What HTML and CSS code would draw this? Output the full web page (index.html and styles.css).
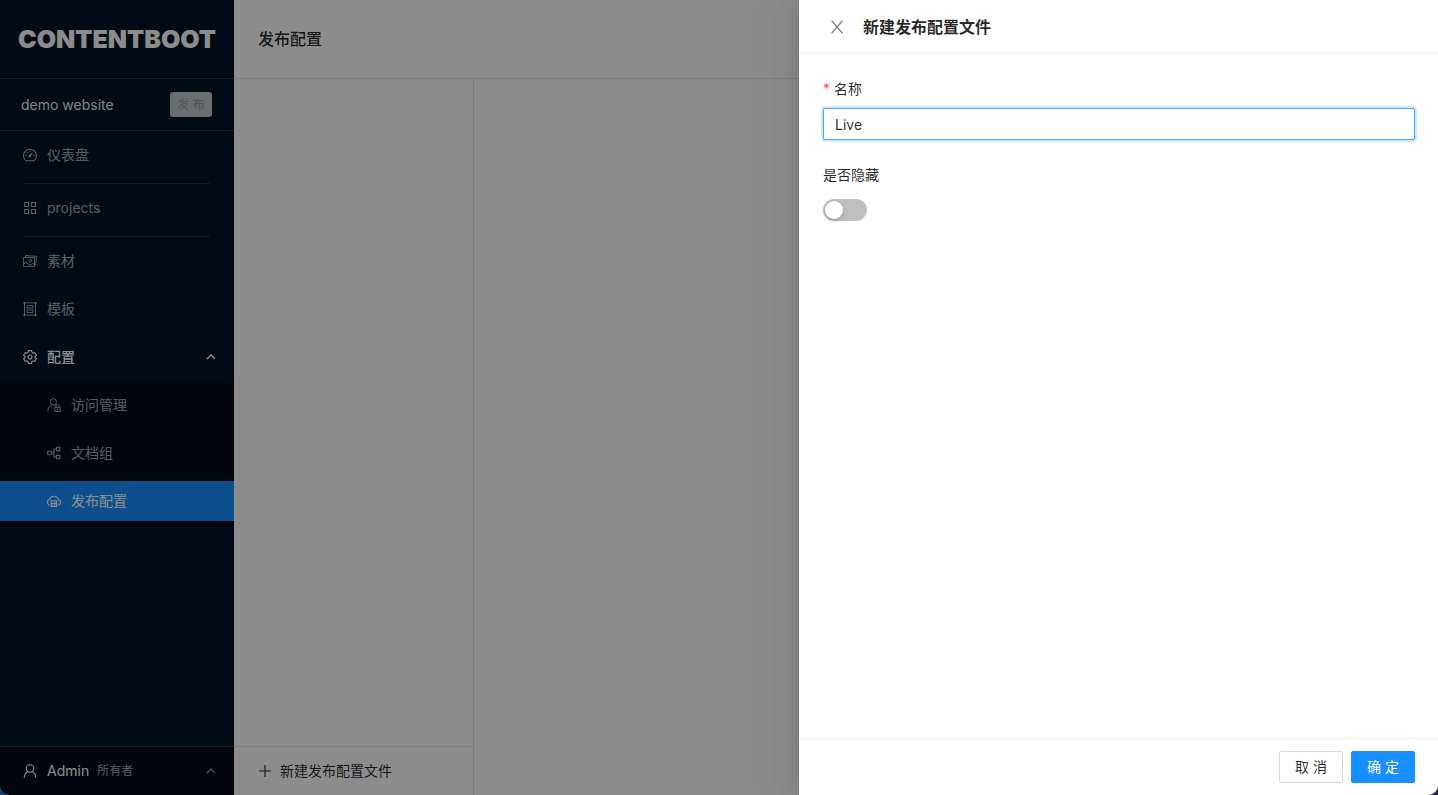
FILE: index.html
```html
<!DOCTYPE html>
<html lang="zh-CN">
<head>
<meta charset="utf-8">
<meta name="viewport" content="width=device-width, initial-scale=1">
<title>发布配置 - CONTENTBOOT</title>
<link rel="stylesheet" href="styles.css">
</head>
<body>
<div class="window">
  <div class="app">
    <aside class="sidebar">
      <div class="brand">CONTENTBOOT</div>
      <div class="site">
        <span class="site-name">demo website</span>
        <button class="publish" type="button" disabled>发 布</button>
      </div>
      <nav class="menu">
        <a class="item" href="#">
          <svg class="icon" viewBox="0 0 14 14"><path d="M3 12.8A6.5 6.5 0 1 1 11 12.8Z"/><path d="M6.6 7.9 9.4 4.9M7 2.4v1.3M2.4 7.4h1.3M10.3 7.4h1.3M3.7 4.1l.9.9"/><circle cx="6.6" cy="7.9" r=".7"/></svg>
          <span>仪表盘</span>
        </a>
        <hr class="divider">
        <a class="item" href="#">
          <svg class="icon" viewBox="0 0 14 14"><path d="M1.5 1.5h4v4h-4zM8.5 1.5h4v4h-4zM1.5 8.5h4v4h-4zM8.5 8.5h4v4h-4z"/></svg>
          <span>projects</span>
        </a>
        <hr class="divider">
        <a class="item" href="#">
          <svg class="icon thin" viewBox="0 0 14 14"><path d="M.5 3.5h11v9H.5z"/><path d="M2.3 3.6 2.6 1.4 13.5 2.4 12.7 11 11.4 11.1"/><path d="m.7 10.2 2.4-2.1 2 2.2 2.3 1 3.9-3.2"/><circle cx="7.4" cy="6.6" r="1.3"/></svg>
          <span>素材</span>
        </a>
        <a class="item" href="#">
          <svg class="icon thin" viewBox="0 0 14 14"><path d="M1.5 0v14M12.5 0v14M0 .9h14M0 13.1h14M4 3.5h6v2.5H4zM4 8h6v2.5H4z"/></svg>
          <span>模板</span>
        </a>
        <a class="item open" href="#" aria-expanded="true">
          <svg class="icon" viewBox="0 0 14 14"><path d="M5.5.6h3l.5 1.9 1 .6 1.8-.5 1.6 2.6-1.4 1.3v1l1.4 1.3-1.6 2.6-1.8-.4-1 .5-.5 1.9h-3L5 11.5l-1-.5-1.8.4L.6 8.8 2 7.5v-1L.6 5.2l1.6-2.6 1.8.5 1-.6Z"/><circle cx="7" cy="7" r="2"/></svg>
          <span>配置</span>
          <svg class="arrow" viewBox="0 0 10 10"><path d="m1 7 4-4 4 4"/></svg>
        </a>
        <div class="submenu">
          <a class="item" href="#">
            <svg class="icon thin" viewBox="0 0 14 14"><circle cx="6.3" cy="3.8" r="3.2"/><path d="M.7 13.4c.2-3.4 1.8-5.6 4-6.4M8 6.6l.8.6"/><path d="M7.8 9.4h5.4v4H7.8zM9 9.4V8a1.5 1.5 0 0 1 3 0v1.4M10.5 11v1"/></svg>
            <span>访问管理</span>
          </a>
          <a class="item" href="#">
            <svg class="icon" viewBox="0 0 14 14"><path d="M.8 5.3h3.4v3.4H.8zM9.5 1.3h3.3v3.3H9.5zM9.5 9.4h3.3v3.3H9.5zM4.2 7H7M9.5 3H7v8h2.5"/></svg>
            <span>文档组</span>
          </a>
          <a class="item active" href="#" aria-current="page">
            <svg class="icon" viewBox="0 0 14 14"><path d="M2.8 11.2A2.9 2.9 0 0 1 2.5 5.6 4.7 4.7 0 0 1 11.5 5.6 2.9 2.9 0 0 1 11.2 11.2"/><path d="M4.3 6.8h5.4v5.6H4.3zM4.3 9.6h5.4M7 8.2h1.3M7 11h1.3"/></svg>
            <span>发布配置</span>
          </a>
        </div>
      </nav>
      <button class="account" type="button">
        <svg class="icon" viewBox="0 0 14 14"><circle cx="7" cy="4.4" r="3.7"/><path d="M1.2 13.6C1.5 10.6 3 8.5 5.1 7.6M12.8 13.6C12.5 10.6 11 8.5 8.9 7.6"/></svg>
        <span class="account-name">Admin</span>
        <span class="account-role">所有者</span>
        <svg class="arrow" viewBox="0 0 10 10"><path d="m1 7 4-4 4 4"/></svg>
      </button>
    </aside>
    <main class="main">
      <h1 class="page-title">发布配置</h1>
      <div class="columns">
        <section class="list">
          <button class="add" type="button">
            <svg class="icon" viewBox="0 0 14 14"><path d="M7 1v12M1 7h12"/></svg>
            <span>新建发布配置文件</span>
          </button>
        </section>
        <section class="detail"></section>
      </div>
    </main>
  </div>
  <div class="mask"></div>
  <form class="drawer" role="dialog" aria-labelledby="drawer-title">
    <header class="drawer-head">
      <button class="close" type="button" aria-label="关闭"><svg viewBox="0 0 14 14"><path d="m1.6.8 10.8 12.4M12.4.8 1.6 13.2"/></svg></button>
      <h2 class="drawer-title" id="drawer-title">新建发布配置文件</h2>
    </header>
    <div class="drawer-body">
      <div class="field">
        <label class="label required" for="name">名称</label>
        <input class="text" id="name" type="text" value="Live" required>
      </div>
      <div class="field">
        <label class="label" for="hidden">是否隐藏</label>
        <div class="control"><input class="switch" id="hidden" type="checkbox" role="switch"></div>
      </div>
    </div>
    <footer class="drawer-foot">
      <button class="btn" type="button">取 消</button>
      <button class="btn primary" type="submit">确 定</button>
    </footer>
  </form>
</div>
</body>
</html>
```
FILE: styles.css
```css
* { box-sizing: border-box; }

body {
  margin: 0;
  background: linear-gradient(90deg, #173d78, #2b2650);
  color: rgba(0, 0, 0, .85);
  font: 14px/22px Inter, "Noto Sans CJK SC", sans-serif;
}

button, input { font: inherit; color: inherit; }
button { border: 0; background: none; padding: 0; }
a { color: inherit; text-decoration: none; }
svg { fill: none; stroke: currentColor; stroke-linecap: butt; flex: none; }

.window {
  position: relative;
  height: 100vh;
  overflow: hidden;
  border-radius: 0 0 10px 10px;
}

.app { display: flex; height: 100%; background: #fff; }

/* Sidebar */
.sidebar {
  width: 234px;
  flex: none;
  display: flex;
  flex-direction: column;
  background: #001529;
  color: rgba(255, 255, 255, .65);
}
.brand {
  height: 79px;
  display: flex;
  align-items: center;
  justify-content: center;
  border-bottom: 1px solid #303030;
  color: #fff;
  font-size: 25px;
  font-weight: 900;
}
.site {
  height: 52px;
  display: flex;
  align-items: center;
  justify-content: space-between;
  padding: 0 22px 0 21px;
  border-bottom: 1px solid #303030;
}
.site-name { color: rgba(255, 255, 255, .95); }
.publish {
  width: 42px;
  height: 25px;
  border-radius: 3px;
  background: #c1c8cc;
  color: #959a9e;
  font-size: 12px;
}
.menu { flex: 1; display: flex; flex-direction: column; }
.item {
  height: 40px;
  margin: 4px 0;
  padding: 0 18px 0 23px;
  display: flex;
  align-items: center;
  gap: 10px;
}
.icon { width: 14px; height: 14px; stroke-width: 1.1; }
.thin { stroke-width: .9; }
.arrow { width: 10px; height: 10px; margin-left: auto; stroke-width: 1.4; }
.divider {
  width: 187px;
  height: 1px;
  margin: 4px 0 0 23px;
  border: 0;
  background: #303030;
}
.open { color: #fff; font-weight: 500; }
.submenu { display: flex; flex-direction: column; background: #000c17; }
.submenu .item { padding-left: 47px; }
.submenu .active { background: #1890ff; color: #fff; }
.account {
  height: 49px;
  padding: 0 18px 0 23px;
  display: flex;
  align-items: center;
  border-top: 1px solid #303030;
  background: #000c17;
}
.account .icon { color: #fff; }
.account .arrow { opacity: .8; }
.account-name { margin-left: 10px; color: #fff; }
.account-role { margin-left: 8px; font-size: 12px; }

/* Content */
.main { flex: 1; display: flex; flex-direction: column; }
.page-title {
  height: 79px;
  margin: 0;
  padding: 0 24px;
  display: flex;
  align-items: center;
  border-bottom: 1px solid #e4e4e4;
  font-size: 16px;
  font-weight: 500;
}
.columns { flex: 1; display: flex; }
.list {
  width: 240px;
  display: flex;
  flex-direction: column;
  justify-content: flex-end;
  border-right: 1px solid #e4e4e4;
}
.add {
  height: 49px;
  padding: 0 24px;
  display: flex;
  align-items: center;
  gap: 8px;
  border-top: 1px solid #e4e4e4;
}
.detail { flex: 1; }

/* Drawer */
.mask { position: absolute; inset: 0; background: rgba(0, 0, 0, .45); }
.drawer {
  position: absolute;
  inset: 0 0 0 auto;
  width: 639px;
  max-width: 100%;
  display: flex;
  flex-direction: column;
  background: #fff;
  box-shadow: -6px 0 16px -8px rgba(0, 0, 0, .08), -9px 0 28px rgba(0, 0, 0, .05), -12px 0 48px 16px rgba(0, 0, 0, .03);
}
.drawer-head {
  height: 54px;
  padding: 0 24px 0 31px;
  display: flex;
  align-items: center;
  gap: 19px;
  border-bottom: 1px solid #f0f0f0;
}
.close { display: flex; color: rgba(0, 0, 0, .5); }
.close svg { width: 14px; height: 14px; stroke-width: 1.3; }
.drawer-title { margin: 0; font-size: 16px; font-weight: 600; }
.drawer-body { flex: 1; padding: 24px 23px 24px 24px; }
.field { display: flex; flex-direction: column; gap: 8px; margin-bottom: 24px; }
.label { align-self: flex-start; }
.required::before { content: "*"; margin-right: 4px; color: #ff4d4f; }
.text {
  width: 100%;
  height: 32px;
  padding: 4px 11px;
  border: 1px solid #40a9ff;
  border-radius: 2px;
  outline: 0;
  box-shadow: 0 0 0 2px rgba(24, 144, 255, .2);
}
.control { min-height: 32px; display: flex; align-items: center; }
.switch {
  appearance: none;
  width: 44px;
  height: 22px;
  margin: 0;
  padding: 2px;
  border-radius: 11px;
  background: #bfbfbf;
}
.switch::before {
  content: "";
  display: block;
  width: 18px;
  height: 18px;
  border-radius: 50%;
  background: #fff;
  box-shadow: 0 2px 4px rgba(0, 35, 11, .2);
}
.switch:checked { background: #1890ff; }
.switch:checked::before { margin-left: auto; }
.drawer-foot {
  padding: 12px 23px;
  display: flex;
  justify-content: flex-end;
  gap: 8px;
  border-top: 1px solid #f0f0f0;
}
.btn {
  width: 64px;
  height: 32px;
  border: 1px solid #d9d9d9;
  border-radius: 2px;
  background: #fff;
}
.primary { border-color: #1890ff; background: #1890ff; color: #fff; }
```
